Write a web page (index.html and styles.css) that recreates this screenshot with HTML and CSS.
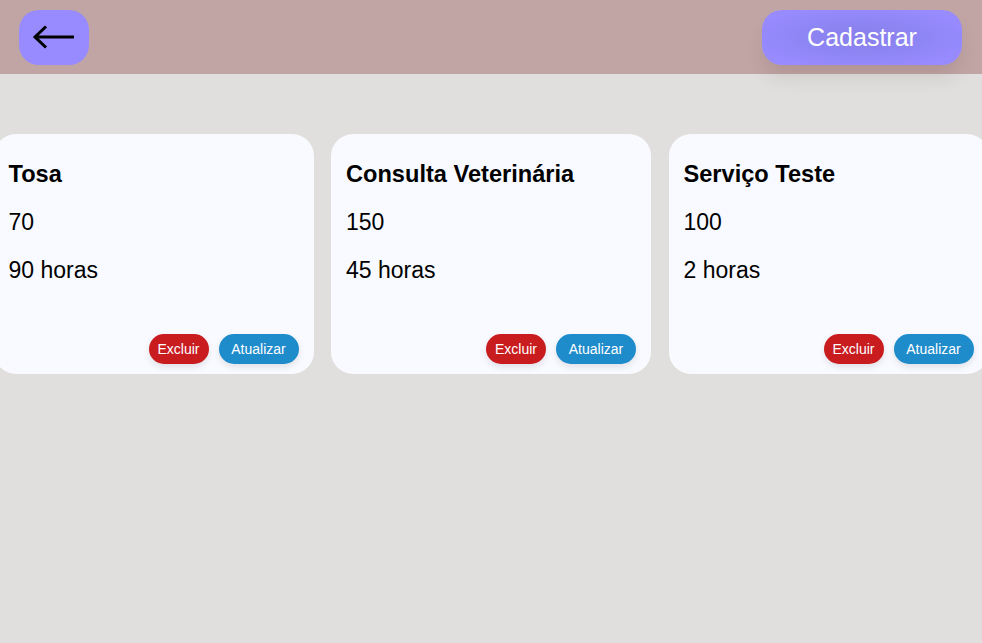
FILE: index.html
```html
<!DOCTYPE html>
<html lang="pt-BR">
<head>
<meta charset="utf-8">
<title>Serviços</title>
<link rel="stylesheet" href="styles.css">
</head>
<body>
<header class="topbar">
  <button class="back-btn" aria-label="Voltar">
    <svg width="70" height="55" viewBox="0 0 70 55">
      <path d="M16 27 H55 M27 16.5 L16 27 L27 37.5" fill="none" stroke="#000" stroke-width="3"/>
    </svg>
  </button>
  <button class="add-btn">Cadastrar</button>
</header>
<main class="list">
  <div class="card">
    <div class="title">Tosa</div>
    <div class="line">70</div>
    <div class="line">90 horas</div>
    <div class="actions">
      <button class="pill del">Excluir</button>
      <button class="pill upd">Atualizar</button>
    </div>
  </div>
  <div class="card">
    <div class="title">Consulta Veterinária</div>
    <div class="line">150</div>
    <div class="line">45 horas</div>
    <div class="actions">
      <button class="pill del">Excluir</button>
      <button class="pill upd">Atualizar</button>
    </div>
  </div>
  <div class="card">
    <div class="title">Serviço Teste</div>
    <div class="line">100</div>
    <div class="line">2 horas</div>
    <div class="actions">
      <button class="pill del">Excluir</button>
      <button class="pill upd">Atualizar</button>
    </div>
  </div>
</main>
</body>
</html>
```
FILE: styles.css
```css
* { box-sizing: border-box; }
html, body {
  margin: 0;
  padding: 0;
  background: #e0dfdd;
  font-family: "Liberation Sans", Arial, sans-serif;
  overflow: hidden;
  height: 100%;
}
.topbar {
  height: 74px;
  background: #c1a4a4;
  display: flex;
  justify-content: space-between;
  align-items: flex-start;
  padding: 10px 20px 0 19px;
  position: relative;
  z-index: 1;
}
button {
  border: none;
  font-family: inherit;
  cursor: pointer;
  padding: 0;
}
.back-btn {
  width: 70px;
  height: 55px;
  border-radius: 20px;
  background: #978bff;
  display: block;
}
.back-btn svg { display: block; }
.add-btn {
  width: 200px;
  height: 55px;
  border-radius: 20px;
  background: radial-gradient(ellipse at center, #877fe9 0%, #8f86f6 45%, #978bff 80%);
  color: #fff;
  font-size: 25px;
  box-shadow: 0 14px 20px -4px rgba(80, 50, 50, 0.14);
}
.list {
  display: flex;
  justify-content: center;
  gap: 17.5px;
  margin-top: 60px;
}
.card {
  flex: 0 0 320px;
  width: 320px;
  height: 240px;
  background: #f8faff;
  border-radius: 22px;
  padding: 16px 15px 10px 15px;
  display: flex;
  flex-direction: column;
  color: #000;
}
.title, .line {
  font-size: 23px;
  line-height: 48px;
  white-space: nowrap;
}
.title { font-weight: bold; font-size: 23.6px; }
.actions {
  margin-top: auto;
  display: flex;
  justify-content: flex-end;
  gap: 10px;
}
.pill {
  height: 30px;
  border-radius: 15px;
  color: #fff;
  font-size: 14px;
  box-shadow: 0 3px 6px rgba(0, 0, 0, 0.1);
}
.del { width: 60px; background: #c91c1f; }
.upd { width: 80px; background: #1e8bcb; }
```
